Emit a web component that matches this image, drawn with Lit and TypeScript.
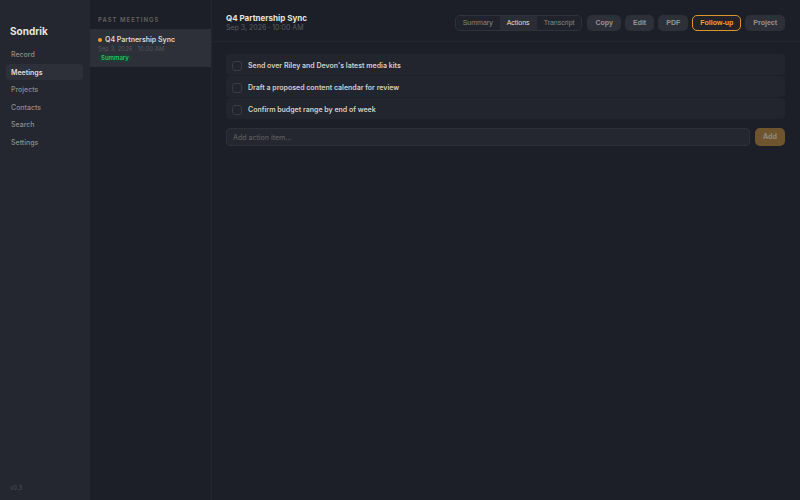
import { LitElement, html, css } from "lit";
import { customElement, state } from "lit/decorators.js";
import { classMap } from "lit/directives/class-map.js";

@customElement("app-root")
export class AppRoot extends LitElement {
  @state() private page = "Meetings";
  @state() private tab = "Actions";
  @state() private draft = "";

  private pages = ["Record", "Meetings", "Projects", "Contacts", "Search", "Settings"];
  private tabs = ["Summary", "Actions", "Transcript"];
  private tools = ["Copy", "Edit", "PDF", "Follow-up", "Project"];
  private items = [
    "Send over Riley and Devon's latest media kits",
    "Draft a proposed content calendar for review",
    "Confirm budget range by end of week",
  ];

  static styles = css`
    :host {
      display: flex;
      min-height: 100vh;
      background: #1c1f27;
      color: #d2d0ca;
      font: 500 7px/10px Inter, "Liberation Sans", sans-serif;
    }
    * { box-sizing: border-box; margin: 0; }
    button, input { font: inherit; color: inherit; }
    button { border: 0; padding: 0; cursor: pointer; }
    .sidebar {
      display: flex;
      flex-direction: column;
      flex: none;
      width: 90px;
      padding: 24px 6px 7px;
      background: #242630;
      border-right: 1px solid #252830;
    }
    .brand { padding-left: 4px; font-size: 10px; line-height: 14px; font-weight: 700; color: #e6e4de; }
    .nav {
      display: flex;
      flex-direction: column;
      justify-content: space-between;
      height: 104px;
      margin-top: 8px;
    }
    .nav a {
      height: 16px;
      padding-left: 5px;
      border-radius: 4px;
      line-height: 17px;
      color: #8f8d88;
      text-decoration: none;
    }
    .nav a.on { background: #2d2f39; color: #e0ded8; font-weight: 600; }
    .version { margin-top: auto; padding-left: 4px; font-size: 6px; font-weight: 400; color: #50525a; }
    .list { flex: none; width: 122px; border-right: 1px solid #23262e; }
    .list h2 {
      padding: 15px 8px 4px;
      font-size: 6px;
      line-height: 10px;
      font-weight: 600;
      letter-spacing: 1px;
      color: #62625f;
    }
    .meeting {
      display: block;
      width: 100%;
      height: 38px;
      padding: 5px 8px;
      background: #2d2f39;
      text-align: left;
    }
    .name { display: flex; align-items: center; gap: 3px; font-weight: 600; color: #dcdad4; }
    .dot { width: 4px; height: 4px; border-radius: 50%; background: #e9a029; }
    .when { display: block; font-size: 6px; line-height: 8px; font-weight: 400; color: #55565c; }
    .tag {
      display: block;
      width: max-content;
      margin-top: 1px;
      padding: 0 3px;
      border-radius: 3px;
      background: #203b34;
      font-size: 6px;
      line-height: 8px;
      font-weight: 600;
      color: #20c45c;
    }
    main { flex: 1; min-width: 0; }
    header {
      display: flex;
      align-items: center;
      justify-content: space-between;
      gap: 8px;
      height: 42px;
      padding: 4px 15px 0 14px;
      border-bottom: 1px solid #23262e;
    }
    h1 { font-size: 8px; line-height: 10px; font-weight: 700; color: #e6e4de; }
    .date { font-size: 7px; line-height: 10px; font-weight: 400; color: #5b5c60; }
    .tools { display: flex; gap: 4px; font-family: "Liberation Sans", Arial, sans-serif; }
    .tabs {
      display: flex;
      height: 16px;
      margin-right: 1px;
      border: 1px solid #30323b;
      border-radius: 5px;
      overflow: hidden;
    }
    .tabs button { padding: 0 7px; background: #20232b; color: #888782; }
    .tabs button.on { background: #2a2d36; color: #e0ded8; }
    .tool {
      height: 16px;
      padding: 0 8px;
      border-radius: 5px;
      background: #2d2f39;
      font-weight: 600;
      color: #96948e;
    }
    .tool.hot { padding: 0 7px; border: 1px solid #d9962c; background: #22232a; color: #eba42b; }
    .content { padding: 12px 15px 0 14px; }
    ul { display: grid; gap: 1px; padding: 0; list-style: none; }
    li label {
      display: flex;
      align-items: center;
      gap: 6px;
      height: 21px;
      padding: 2px 6px 0;
      border-radius: 4px;
      background: #22252e;
      font-weight: 600;
    }
    li input {
      appearance: none;
      width: 10px;
      height: 10px;
      border: 1px solid #393b43;
      border-radius: 3px;
    }
    form { display: flex; gap: 5px; height: 18px; margin-top: 9px; }
    .entry {
      flex: 1;
      min-width: 0;
      padding: 1px 6px 0;
      border: 1px solid #2e3139;
      border-radius: 4px;
      background: #242630;
      outline: 0;
    }
    .entry::placeholder { color: #5c5c5c; opacity: 1; }
    .add { width: 30px; border-radius: 5px; background: #6e552e; font-weight: 700; color: #918a80; }
  `;

  render() {
    return html`
      <aside class="sidebar">
        <div class="brand">Sondrik</div>
        <nav class="nav">
          ${this.pages.map(
            (p) => html`<a href="#" class=${classMap({ on: p === this.page })} @click=${() => (this.page = p)}>${p}</a>`
          )}
        </nav>
        <div class="version">v0.3</div>
      </aside>
      <section class="list">
        <h2>PAST MEETINGS</h2>
        <button class="meeting">
          <span class="name"><span class="dot"></span>Q4 Partnership Sync</span>
          <span class="when">Sep 3, 2026 · 10:00 AM</span>
          <span class="tag">Summary</span>
        </button>
      </section>
      <main>
        <header>
          <div>
            <h1>Q4 Partnership Sync</h1>
            <div class="date">Sep 3, 2026 · 10:00 AM</div>
          </div>
          <div class="tools">
            <div class="tabs">
              ${this.tabs.map(
                (t) => html`<button class=${classMap({ on: t === this.tab })} @click=${() => (this.tab = t)}>${t}</button>`
              )}
            </div>
            ${this.tools.map((t) => html`<button class=${classMap({ tool: true, hot: t === "Follow-up" })}>${t}</button>`)}
          </div>
        </header>
        <div class="content">
          <ul>
            ${this.items.map((i) => html`<li><label><input type="checkbox" />${i}</label></li>`)}
          </ul>
          <form @submit=${(e: Event) => e.preventDefault()}>
            <input
              class="entry"
              type="text"
              aria-label="Add action item"
              placeholder="Add action item..."
              .value=${this.draft}
              @input=${(e: Event) => (this.draft = (e.target as HTMLInputElement).value)}
            />
            <button class="add">Add</button>
          </form>
        </div>
      </main>
    `;
  }
}
